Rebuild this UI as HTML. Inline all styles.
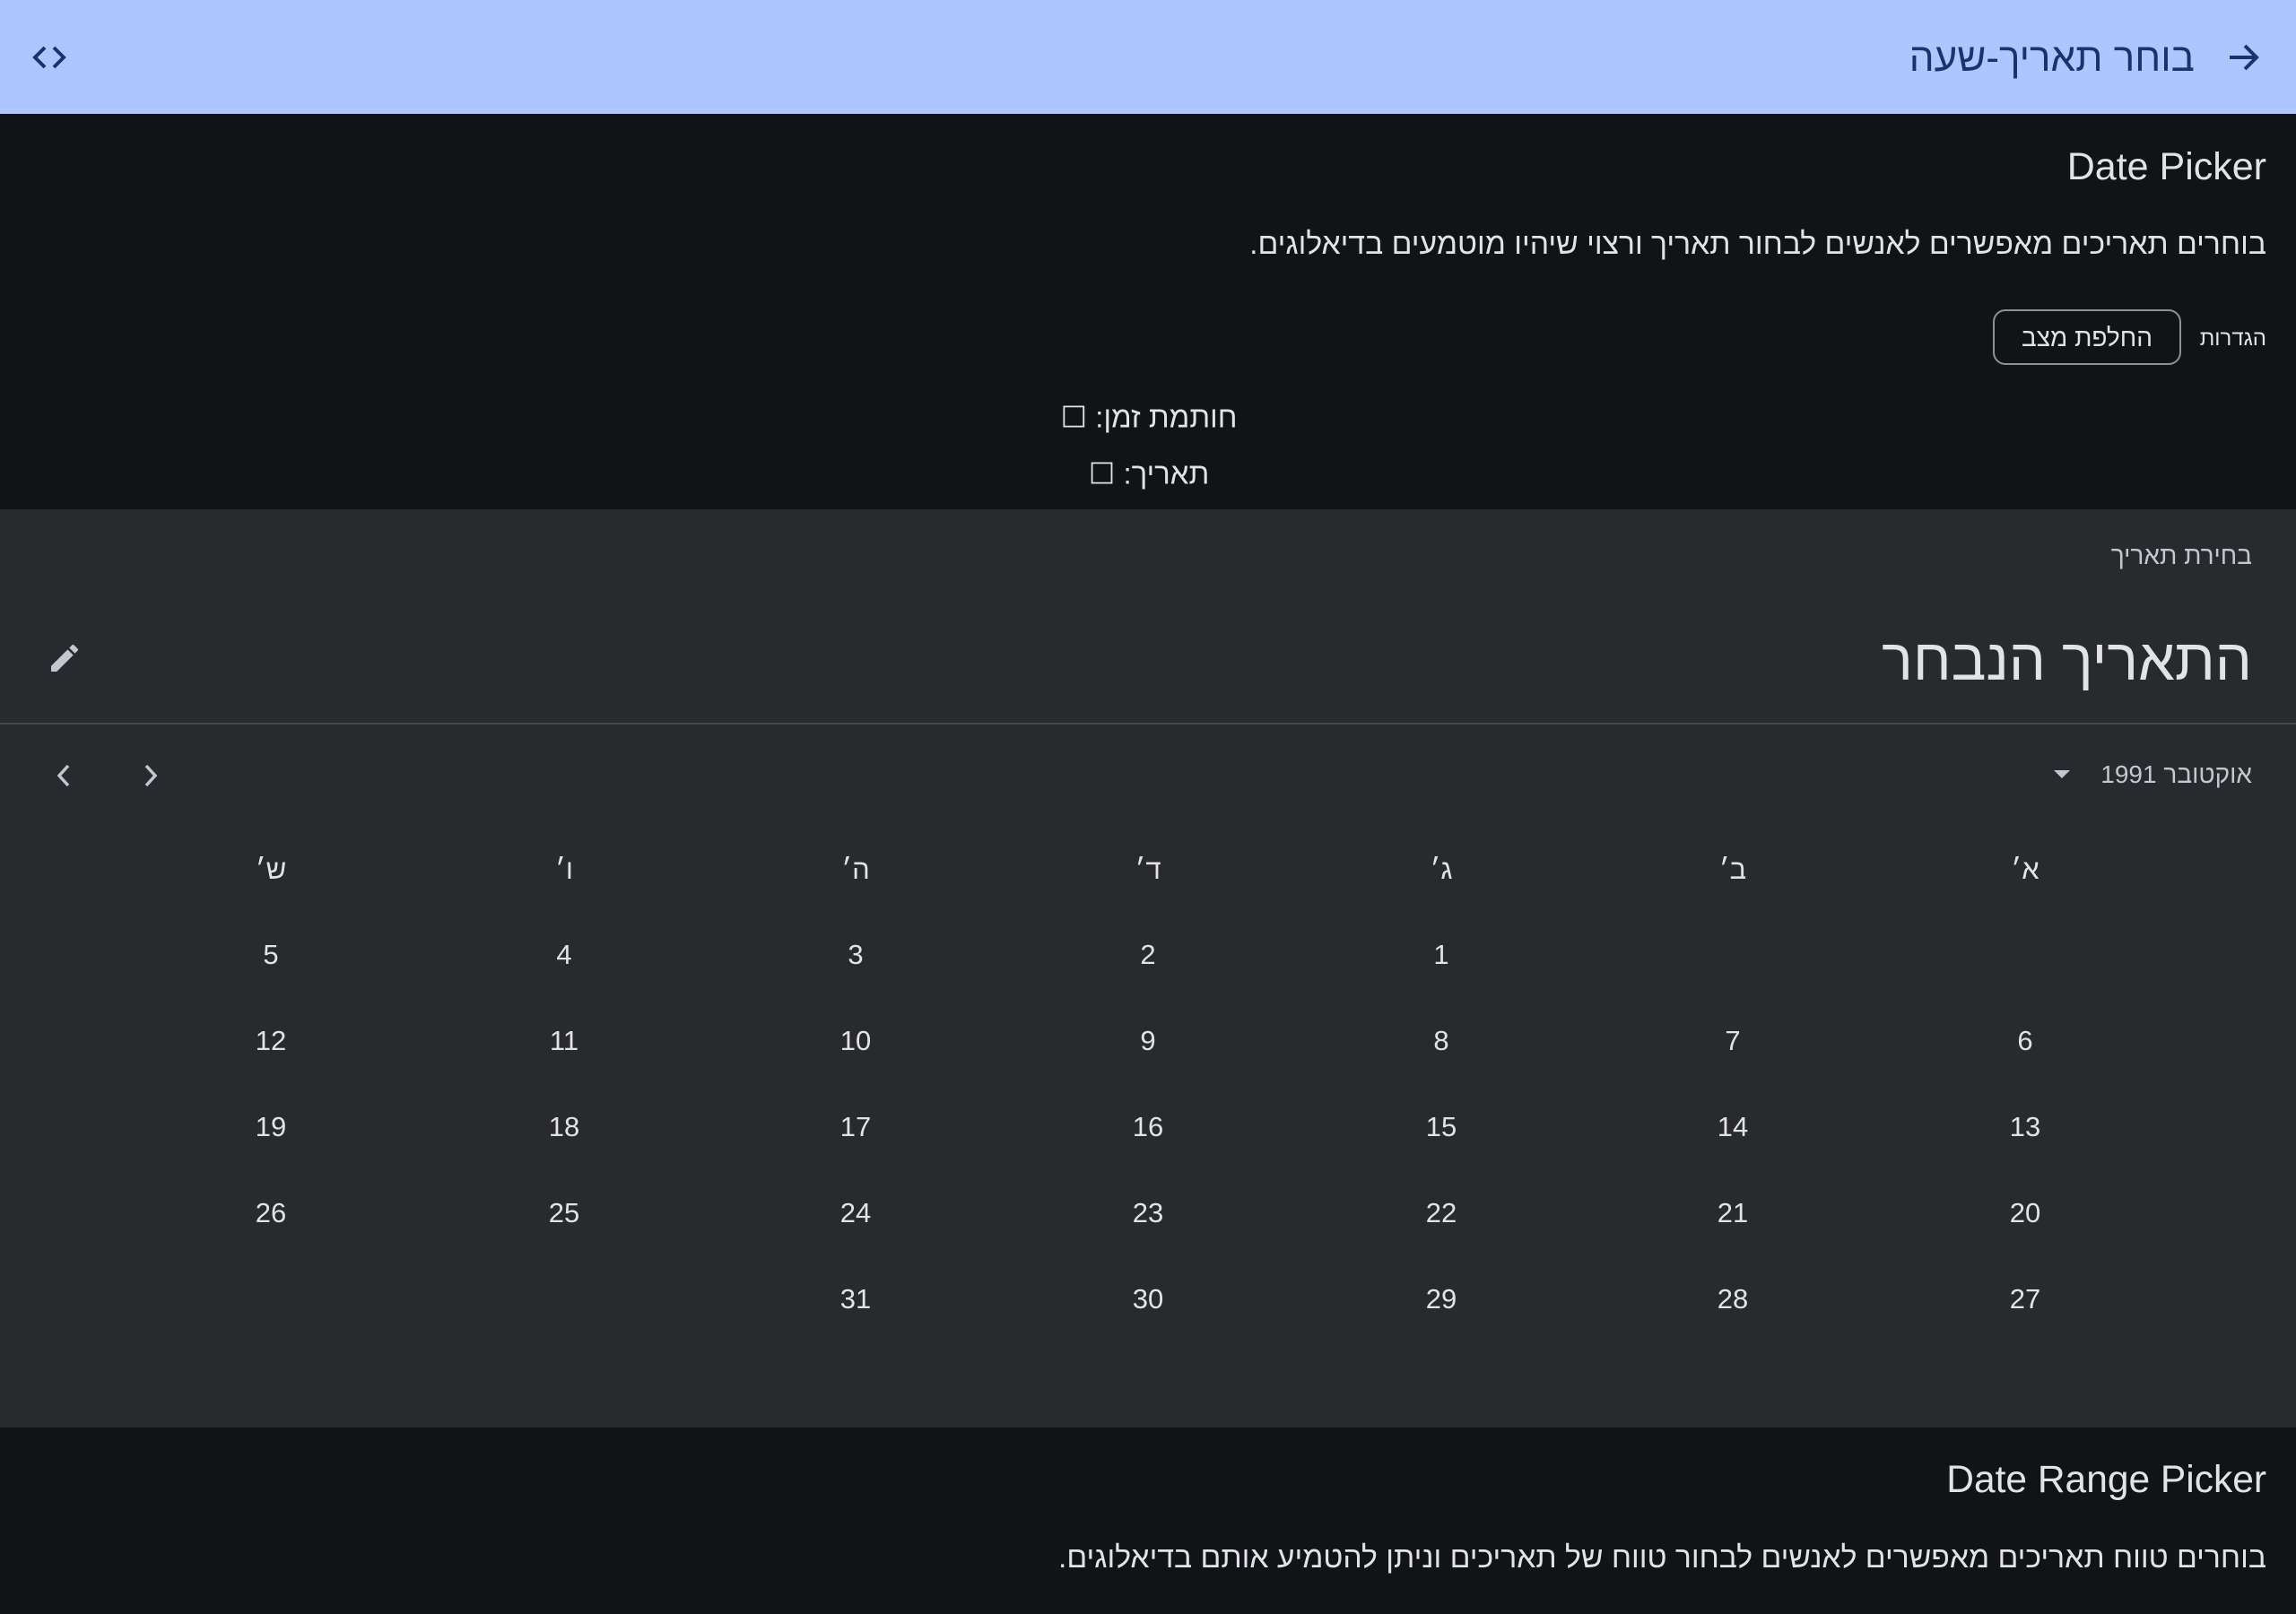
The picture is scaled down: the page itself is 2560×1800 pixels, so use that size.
<!DOCTYPE html>
<html><head><meta charset="utf-8"><style>
*{margin:0;padding:0;box-sizing:border-box}
body{width:2560px;height:1800px;overflow:hidden;background:#111316;font-family:"Liberation Sans","Noto Sans CJK SC",sans-serif;color:#e2e2e9;position:relative}
.a{position:absolute;white-space:nowrap}
.r{direction:rtl;text-align:right}
.c{transform:translate(-50%,-50%);text-align:center}
</style></head><body>
<div class="a" style="left:0;top:0;width:2560px;height:127px;background:#adc6ff"></div>
<svg class="a" style="left:30px;top:44px" width="50" height="40" viewBox="0 0 50 40"><path d="M20 9 L9 20 L20 31 M30 9 L41 20 L30 31" stroke="#1a3370" stroke-width="4" fill="none"/></svg>
<svg class="a" style="left:2480px;top:44px" width="44" height="40" viewBox="0 0 44 40"><path d="M6 20 H36 M23 7 L36 20 L23 33" stroke="#1a3370" stroke-width="4" fill="none"/></svg>
<div class="a r" style="right:113px;top:40px;font-size:44px;color:#1a3370">בוחר תאריך-שעה</div>

<div class="a r" style="right:33px;top:162px;font-size:43px">Date Picker</div>
<div class="a r" style="right:33px;top:253px;font-size:33.7px">בוחרים תאריכים מאפשרים לאנשים לבחור תאריך ורצוי שיהיו מוטמעים בדיאלוגים.</div>
<div class="a r" style="right:33px;top:364px;font-size:24px">הגדרות</div>
<div class="a" style="left:2222px;top:345px;width:210px;height:62px;border:2px solid #8c9199;border-radius:14px;text-align:center;line-height:60px;font-size:28px;direction:rtl">החלפת מצב</div>
<div class="a c" style="left:1281px;top:465px;font-size:33px;direction:rtl">חותמת זמן: ☐</div>
<div class="a c" style="left:1281px;top:528px;font-size:33px;direction:rtl">תאריך: ☐</div>

<div class="a" style="left:0;top:568px;width:2560px;height:1024px;background:#292a2d"></div>
<div class="a r" style="right:49px;top:604px;font-size:28px;color:#c4c6d0">בחירת תאריך</div>
<div class="a r" style="right:49px;top:698px;font-size:65px;color:#e2e2e9">התאריך הנבחר</div>
<svg class="a" style="left:52px;top:714px" width="40" height="40" viewBox="0 0 24 24"><path d="M3 17.25V21h3.75L17.81 9.94l-3.75-3.75L3 17.25zM20.71 7.04a1 1 0 0 0 0-1.41l-2.34-2.34a1 1 0 0 0-1.41 0l-1.83 1.83 3.75 3.75 1.83-1.83z" fill="#c4c6d0"/></svg>
<div class="a" style="left:0;top:806px;width:2560px;height:2px;background:#44474e"></div>
<div class="a r" style="right:49px;top:848px;font-size:28px;color:#c4c6d0">אוקטובר 1991</div>
<svg class="a" style="left:2288px;top:857px" width="22" height="14"><path d="M2 2 H20 L11 11Z" fill="#c4c6d0"/></svg>
<svg class="a" style="left:58px;top:850px" width="28" height="30" viewBox="0 0 28 30"><path d="M18 4 L8 15 L18 26" stroke="#c4c6d0" stroke-width="3.5" fill="none"/></svg>
<svg class="a" style="left:153px;top:850px" width="28" height="30" viewBox="0 0 28 30"><path d="M10 4 L20 15 L10 26" stroke="#c4c6d0" stroke-width="3.5" fill="none"/></svg>

<div style="font-size:31px">
<div class="a c" style="left:2258px;top:970px">א׳</div><div class="a c" style="left:1932px;top:970px">ב׳</div><div class="a c" style="left:1607px;top:970px">ג׳</div><div class="a c" style="left:1280px;top:970px">ד׳</div><div class="a c" style="left:954px;top:970px">ה׳</div><div class="a c" style="left:629px;top:970px">ו׳</div><div class="a c" style="left:302px;top:970px">ש׳</div>
<div class="a c" style="left:1607px;top:1065px">1</div><div class="a c" style="left:1280px;top:1065px">2</div><div class="a c" style="left:954px;top:1065px">3</div><div class="a c" style="left:629px;top:1065px">4</div><div class="a c" style="left:302px;top:1065px">5</div>
<div class="a c" style="left:2258px;top:1161px">6</div><div class="a c" style="left:1932px;top:1161px">7</div><div class="a c" style="left:1607px;top:1161px">8</div><div class="a c" style="left:1280px;top:1161px">9</div><div class="a c" style="left:954px;top:1161px">10</div><div class="a c" style="left:629px;top:1161px">11</div><div class="a c" style="left:302px;top:1161px">12</div>
<div class="a c" style="left:2258px;top:1257px">13</div><div class="a c" style="left:1932px;top:1257px">14</div><div class="a c" style="left:1607px;top:1257px">15</div><div class="a c" style="left:1280px;top:1257px">16</div><div class="a c" style="left:954px;top:1257px">17</div><div class="a c" style="left:629px;top:1257px">18</div><div class="a c" style="left:302px;top:1257px">19</div>
<div class="a c" style="left:2258px;top:1353px">20</div><div class="a c" style="left:1932px;top:1353px">21</div><div class="a c" style="left:1607px;top:1353px">22</div><div class="a c" style="left:1280px;top:1353px">23</div><div class="a c" style="left:954px;top:1353px">24</div><div class="a c" style="left:629px;top:1353px">25</div><div class="a c" style="left:302px;top:1353px">26</div>
<div class="a c" style="left:2258px;top:1449px">27</div><div class="a c" style="left:1932px;top:1449px">28</div><div class="a c" style="left:1607px;top:1449px">29</div><div class="a c" style="left:1280px;top:1449px">30</div><div class="a c" style="left:954px;top:1449px">31</div>
</div>

<div class="a r" style="right:33px;top:1627px;font-size:42.5px">Date Range Picker</div>
<div class="a r" style="right:33px;top:1718px;font-size:33.7px">בוחרים טווח תאריכים מאפשרים לאנשים לבחור טווח של תאריכים וניתן להטמיע אותם בדיאלוגים.</div>
</body></html>
